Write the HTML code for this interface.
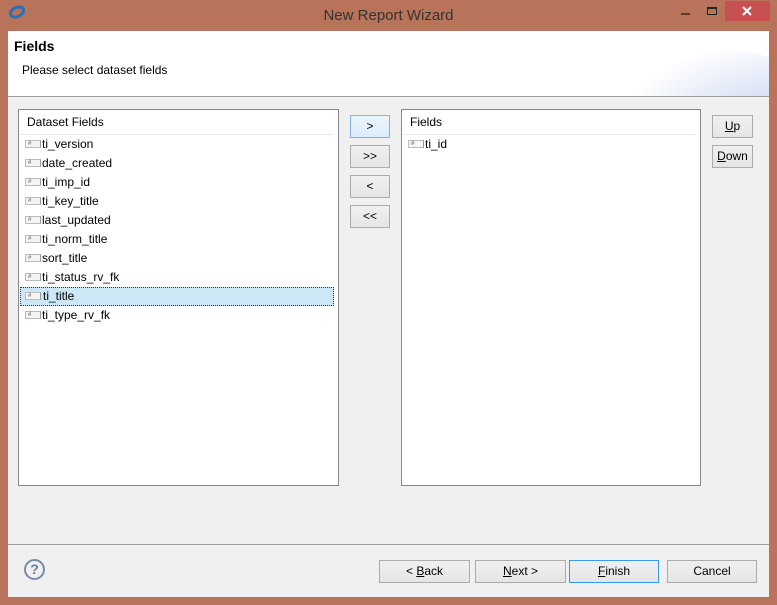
<!DOCTYPE html>
<html><head><style>
*{margin:0;padding:0;box-sizing:border-box}
body{width:777px;height:605px;background:#b8735a;font-family:"Liberation Sans",sans-serif;font-size:12px;color:#000;position:relative;overflow:hidden}
.a{position:absolute}
.btn{position:absolute;background:linear-gradient(#f0f0f0,#e5e5e5);border:1px solid #acacac;text-align:center;font-size:12px;line-height:21px}
.list{position:absolute;background:#fff;border:1px solid #828790}
.hdr{position:absolute;left:1px;right:4px;top:0;height:25px;border-bottom:1px solid #e3eaf4;padding-left:7px;line-height:25px}
.it{position:absolute;left:4px;height:19px;line-height:19px;padding-left:19px;width:314px}
.ic{position:absolute;left:2px;top:5px;width:16px;height:8px;border:1px solid #bbb;border-right-color:#999;background:#f4f4f4;font-size:6px;line-height:6px;padding-left:2px;color:#555}
u{text-decoration:underline}
</style></head><body>
<svg class="a" style="left:8px;top:5px" width="20" height="14"><ellipse cx="9" cy="7" rx="7" ry="4.5" fill="none" stroke="#2a6fb7" stroke-width="3" transform="rotate(-25 9 7)"/></svg>
<div class="a" style="left:0;width:777px;top:7px;text-align:center;font-size:15px;color:#333">New Report Wizard</div>
<div class="a" style="left:681px;top:13px;width:9px;height:2px;background:#5b3a2e"></div>
<div class="a" style="left:707px;top:7px;width:10px;height:8px;border:1px solid #222;border-top-width:2px"></div>
<svg class="a" style="left:725px;top:1px" width="45" height="20"><rect width="45" height="20" fill="#c75050"/><path d="M18 6L26 14M26 6L18 14" stroke="#fff" stroke-width="2"/></svg>
<div class="a" style="left:8px;top:31px;width:761px;height:566px;background:#f0f0f0"></div>
<div class="a" style="left:8px;top:31px;width:761px;height:66px;background:#fff;border-bottom:1px solid #a0a0a0;overflow:hidden">
<div class="a" style="right:-60px;top:20px;width:200px;height:140px;border-radius:50%;background:radial-gradient(ellipse at 80% 70%,#d9e2f5 40%,#fff 80%)"></div>
<div class="a" style="left:6px;top:7px;font-size:14px;font-weight:bold">Fields</div>
<div class="a" style="left:14px;top:32px">Please select dataset fields</div>
</div>
<div class="list" style="left:18px;top:109px;width:321px;height:377px">
<div class="hdr">Dataset Fields</div>
<div class="it" style="top:25px"><span class="ic">#</span>ti_version</div>
<div class="it" style="top:44px"><span class="ic">#</span>date_created</div>
<div class="it" style="top:63px"><span class="ic">#</span>ti_imp_id</div>
<div class="it" style="top:82px"><span class="ic">#</span>ti_key_title</div>
<div class="it" style="top:101px"><span class="ic">#</span>last_updated</div>
<div class="it" style="top:120px"><span class="ic">#</span>ti_norm_title</div>
<div class="it" style="top:139px"><span class="ic">#</span>sort_title</div>
<div class="it" style="top:158px"><span class="ic">#</span>ti_status_rv_fk</div>
<div class="it" style="top:177px;left:1px;padding-left:22px;background:#cce8f6;border:1px dotted #333;height:19px;line-height:17px"><span class="ic" style="left:4px;top:4px">#</span>ti_title</div>
<div class="it" style="top:196px"><span class="ic">#</span>ti_type_rv_fk</div>
</div>
<div class="list" style="left:401px;top:109px;width:300px;height:377px">
<div class="hdr">Fields</div>
<div class="it" style="top:25px"><span class="ic">#</span>ti_id</div>
</div>
<div class="btn" style="left:350px;top:115px;width:40px;height:23px;border-color:#7eb4ea;background:linear-gradient(#ecf4fc,#dcecfc)">&gt;</div>
<div class="btn" style="left:350px;top:145px;width:40px;height:23px">&gt;&gt;</div>
<div class="btn" style="left:350px;top:175px;width:40px;height:23px">&lt;</div>
<div class="btn" style="left:350px;top:205px;width:40px;height:23px">&lt;&lt;</div>
<div class="btn" style="left:712px;top:115px;width:41px;height:23px"><u>U</u>p</div>
<div class="btn" style="left:712px;top:145px;width:41px;height:23px"><u>D</u>own</div>
<div class="a" style="left:8px;top:544px;width:761px;height:1px;background:#a0a0a0"></div>
<div class="a" style="left:24px;top:559px;width:21px;height:21px;border:2px solid #7a8ba8;border-radius:50%;text-align:center;font-weight:bold;font-size:14px;line-height:17px;color:#6a7b98">?</div>
<div class="btn" style="left:379px;top:560px;width:91px;height:23px">&lt; <u>B</u>ack</div>
<div class="btn" style="left:475px;top:560px;width:91px;height:23px"><u>N</u>ext &gt;</div>
<div class="btn" style="left:569px;top:560px;width:90px;height:23px;border-color:#3399ff"><u>F</u>inish</div>
<div class="btn" style="left:667px;top:560px;width:90px;height:23px">Cancel</div>
</body></html>
